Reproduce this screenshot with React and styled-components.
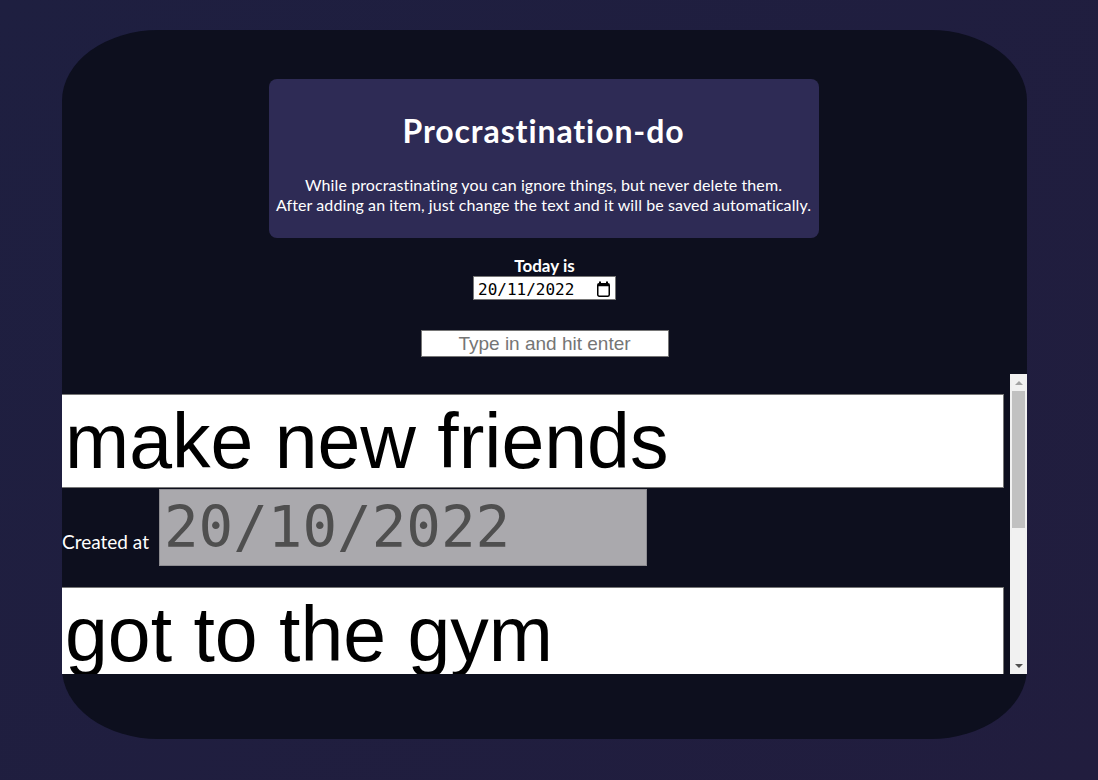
import styled, { createGlobalStyle } from "styled-components";

const GlobalStyle = createGlobalStyle`
  html, body {
    margin: 0;
    padding: 0;
  }
  body {
    min-height: 100vh;
    background: linear-gradient(135deg, #1e1f40 0%, #211d3e 100%);
    font-family: Lato, "Noto Sans", sans-serif;
    color: #ffffff;
  }
`;

const Page = styled.main`
  padding: 30px 0 0 62px;
  height: 780px;
  box-sizing: border-box;
`;

const Container = styled.section`
  width: 965px;
  height: 709px;
  box-sizing: border-box;
  padding-top: 49px;
  border-radius: 10%;
  background: #0d0f1e;
  display: flex;
  flex-direction: column;
  align-items: center;
`;

const HeaderCard = styled.header`
  width: 550px;
  height: 159px;
  box-sizing: border-box;
  padding-top: 34px;
  margin-left: -2px;
  border-radius: 8px;
  background: #2e2b55;
  text-align: center;
`;

const Title = styled.h1`
  margin: 0 0 26px;
  font-size: 32px;
  line-height: 36px;
  letter-spacing: 0.9px;
  font-weight: 700;
  color: #ffffff;
`;

const Description = styled.p`
  margin: 0;
  font-size: 16px;
  line-height: 20px;
  letter-spacing: 0.1px;
  color: #ffffff;
`;

const TodayBlock = styled.div`
  margin-top: 18px;
  display: flex;
  flex-direction: column;
  align-items: center;
`;

const TodayLabel = styled.label`
  font-size: 17px;
  line-height: 20px;
  font-weight: 700;
`;

const DateField = styled.div`
  width: 143px;
  height: 24px;
  box-sizing: border-box;
  padding: 2px 4px 0 4px;
  border: 1px solid #767676;
  background: #ffffff;
  color: #000000;
  display: flex;
  align-items: center;
  justify-content: space-between;
  font-family: "DejaVu Sans Mono", monospace;
  font-size: 16px;
`;

const NewTaskInput = styled.input`
  margin-top: 30px;
  width: 248px;
  height: 27px;
  box-sizing: border-box;
  border: 1px solid #767676;
  padding: 0 4px;
  font-family: "Liberation Sans", Arial, sans-serif;
  font-size: 19px;
  text-align: center;
  color: #000000;
  outline: none;
  &::placeholder {
    color: #757575;
  }
`;

const ListFrame = styled.div`
  margin-top: 17px;
  width: 100%;
  height: 300px;
  display: flex;
`;

const TaskList = styled.ul`
  list-style: none;
  margin: 0;
  padding: 20px 0 0;
  flex: 1;
  overflow: hidden;
`;

const TaskItem = styled.li`
  margin-bottom: 21px;
  &:last-child {
    margin-bottom: 0;
  }
`;

const TaskInput = styled.input`
  display: block;
  width: 942px;
  height: 94px;
  box-sizing: border-box;
  margin: 0;
  padding: 1px 3px;
  border: 1px solid #767676;
  border-left: 0;
  background: #ffffff;
  color: #000000;
  font-family: "Liberation Sans", Arial, sans-serif;
  font-size: 77px;
  outline: none;
`;

const CreatedRow = styled.div`
  display: flex;
  align-items: baseline;
  gap: 10px;
  margin-top: 1px;
`;

const CreatedLabel = styled.span`
  font-size: 19px;
  color: #ffffff;
  position: relative;
  top: 2px;
`;

const CreatedDate = styled.div`
  width: 488px;
  height: 77px;
  box-sizing: border-box;
  padding: 0 4px;
  border: 1px solid #8d8c91;
  background: #aaa9ad;
  color: #4f4f4f;
  display: flex;
  align-items: center;
  font-family: "DejaVu Sans Mono", monospace;
  font-size: 57.5px;
`;

const ScrollBar = styled.div`
  width: 17px;
  flex: none;
  display: flex;
  flex-direction: column;
  background: #f1f1f1;
`;

const ScrollButton = styled.div`
  height: 17px;
  flex: none;
  display: flex;
  align-items: center;
  justify-content: center;
`;

const Arrow = styled.span`
  width: 0;
  height: 0;
  border-left: 4px solid transparent;
  border-right: 4px solid transparent;
  ${(props) =>
    props.$down
      ? `border-top: 4px solid ${props.$color};`
      : `border-bottom: 4px solid ${props.$color};`}
`;

const ScrollTrack = styled.div`
  flex: 1;
  padding: 0 2px;
`;

const ScrollThumb = styled.div`
  height: 137px;
  background: #c1c1c1;
`;

function CalendarIcon() {
  return (
    <svg width="15" height="17" viewBox="0 0 15 17" aria-hidden="true">
      <rect x="3" y="0.5" width="2" height="3" fill="#000" />
      <rect x="10" y="0.5" width="2" height="3" fill="#000" />
      <rect x="1.75" y="2.75" width="11.5" height="12.5" rx="1.5" fill="none" stroke="#000" strokeWidth="1.5" />
      <rect x="1.75" y="2.75" width="11.5" height="2.5" fill="#000" />
    </svg>
  );
}

const tasks = [
  { id: 1, text: "make new friends", created: "20/10/2022" },
  { id: 2, text: "got to the gym", created: "20/10/2022" },
];

export default function App() {
  return (
    <>
      <GlobalStyle />
      <Page>
        <Container>
          <HeaderCard>
            <Title>Procrastination-do</Title>
            <Description>
              While procrastinating you can ignore things, but never delete them.
            </Description>
            <Description>
              After adding an item, just change the text and it will be saved automatically.
            </Description>
          </HeaderCard>

          <TodayBlock>
            <TodayLabel>Today is</TodayLabel>
            <DateField>
              <span>20/11/2022</span>
              <CalendarIcon />
            </DateField>
          </TodayBlock>

          <NewTaskInput placeholder="Type in and hit enter" />

          <ListFrame>
            <TaskList>
              {tasks.map((task) => (
                <TaskItem key={task.id}>
                  <TaskInput defaultValue={task.text} />
                  <CreatedRow>
                    <CreatedLabel>Created at</CreatedLabel>
                    <CreatedDate>{task.created}</CreatedDate>
                  </CreatedRow>
                </TaskItem>
              ))}
            </TaskList>
            <ScrollBar>
              <ScrollButton>
                <Arrow $color="#a3a3a3" />
              </ScrollButton>
              <ScrollTrack>
                <ScrollThumb />
              </ScrollTrack>
              <ScrollButton>
                <Arrow $down $color="#505050" />
              </ScrollButton>
            </ScrollBar>
          </ListFrame>
        </Container>
      </Page>
    </>
  );
}
